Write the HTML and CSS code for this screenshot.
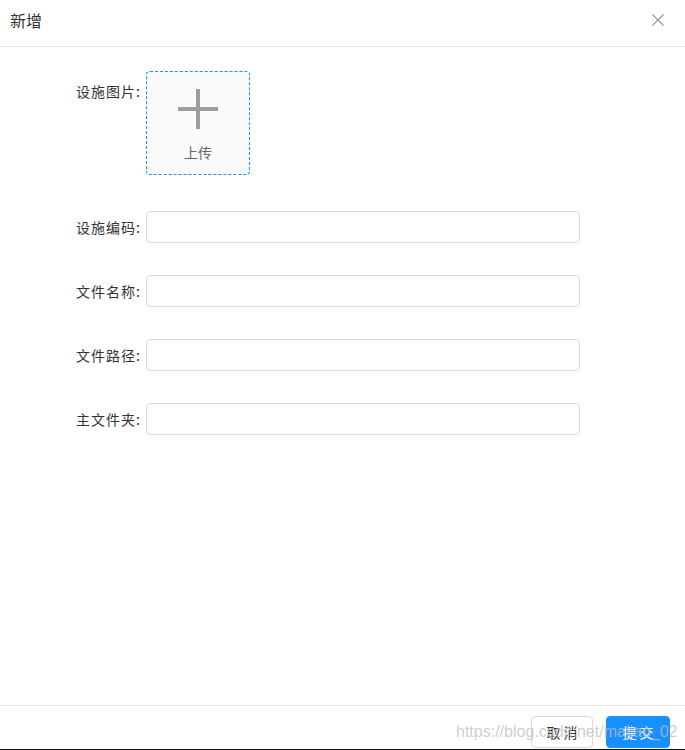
FILE: index.html
```html
<!DOCTYPE html>
<html lang="zh-CN">
<head>
    <meta charset="UTF-8">
    <meta name="viewport" content="width=device-width, initial-scale=1.0">
    <title>新增</title>
    <link rel="stylesheet" href="styles.css">
</head>
<body>
    <div class="modal">
        <div class="modal-header">
            <span class="modal-title">新增</span>
            <button class="modal-close" type="button">
                <svg width="14" height="14" viewBox="0 0 14 14">
                    <path d="M1.5 1.5 L12.5 12.5 M12.5 1.5 L1.5 12.5" stroke="#999" stroke-width="1.3" fill="none"/>
                </svg>
            </button>
        </div>
        <div class="modal-body">
            <div class="form-row upload-row">
                <label class="form-label">设施图片:</label>
                <div class="upload-box">
                    <svg width="40" height="40" viewBox="0 0 40 40">
                        <path d="M20 0 V40 M0 20 H40" stroke="#9d9d9d" stroke-width="4" fill="none"/>
                    </svg>
                    <span class="upload-text">上传</span>
                </div>
            </div>
            <div class="form-row">
                <label class="form-label">设施编码:</label>
                <input class="form-input" type="text">
            </div>
            <div class="form-row">
                <label class="form-label">文件名称:</label>
                <input class="form-input" type="text">
            </div>
            <div class="form-row">
                <label class="form-label">文件路径:</label>
                <input class="form-input" type="text">
            </div>
            <div class="form-row">
                <label class="form-label">主文件夹:</label>
                <input class="form-input" type="text">
            </div>
        </div>
        <div class="modal-footer">
            <button class="btn" type="button">取 消</button>
            <button class="btn btn-primary" type="button">提 交</button>
        </div>
        <!-- blog watermark burned into the original screenshot -->
        <div class="watermark">https://blog.csdn.net/maliao_02</div>
    </div>
</body>
</html>
```

FILE: styles.css
```css
body {
    margin: 0;
    background: #fff;
    font-family: "Noto Sans CJK SC", "Noto Sans", sans-serif;
    font-size: 14px;
    color: #333;
}
.modal {
    position: relative;
    height: 749px;
    display: flex;
    flex-direction: column;
    border-bottom: 1px solid #111;
    background: #fff;
}
.modal-header {
    height: 47px;
    display: flex;
    align-items: center;
    justify-content: space-between;
    padding: 0 20px 7px 10px;
    box-sizing: border-box;
    border-bottom: 1px solid #e8e8e8;
}
.modal-title {
    font-size: 16px;
    color: #333;
}
.modal-close {
    border: none;
    background: none;
    padding: 0;
    width: 14px;
    height: 14px;
    cursor: pointer;
    display: flex;
}
.modal-body {
    flex: 1;
    padding-top: 24px;
}
.form-row {
    display: flex;
    align-items: center;
    margin-bottom: 32px;
}
.upload-row {
    align-items: flex-start;
    margin-bottom: 36px;
}
.upload-row .form-label {
    line-height: 40px;
}
.form-label {
    width: 141px;
    padding-right: 5px;
    text-align: right;
    letter-spacing: 1px;
    color: #333;
}
.upload-box {
    width: 104px;
    height: 104px;
    box-sizing: border-box;
    border: 1px dashed #1890ff;
    border-radius: 4px;
    background: #fafafa;
    display: flex;
    flex-direction: column;
    align-items: center;
    padding-top: 17px;
}
.upload-text {
    margin-top: 13px;
    color: #666;
    font-size: 14px;
}
.form-input {
    width: 434px;
    height: 32px;
    box-sizing: border-box;
    border: 1px solid #d9d9d9;
    border-radius: 4px;
    padding: 0 11px;
    font-family: inherit;
    font-size: 14px;
    outline: none;
}
.modal-footer {
    border-top: 1px solid #e8e8e8;
    display: flex;
    justify-content: flex-end;
    gap: 13px;
    padding: 10px 15px 1px 0;
}
.btn {
    height: 32px;
    width: 62px;
    border: 1px solid #d9d9d9;
    border-radius: 4px;
    background: #fff;
    color: #333;
    font-family: inherit;
    font-size: 14px;
    padding: 0;
    cursor: pointer;
}
.btn-primary {
    width: 64px;
    background: #1890ff;
    border-color: #1890ff;
    color: #fff;
}
.watermark {
    position: absolute;
    left: 456px;
    bottom: 8px;
    font-family: "Liberation Sans", Arial, sans-serif;
    font-size: 16px;
    color: rgba(190, 190, 190, 0.75);
    pointer-events: none;
}
```
